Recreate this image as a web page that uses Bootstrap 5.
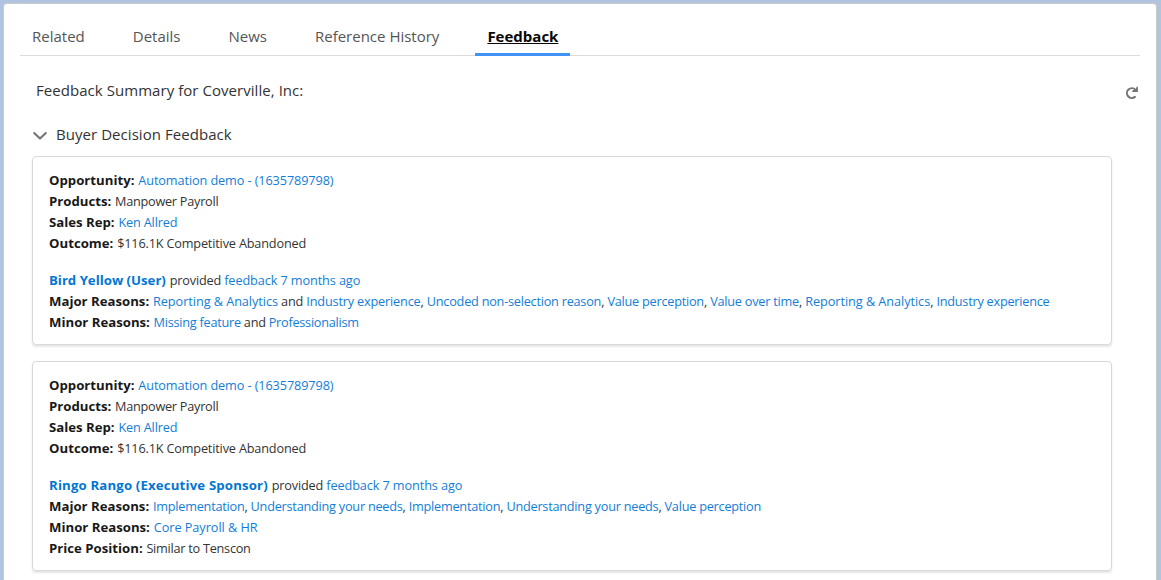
<!DOCTYPE html>
<html lang="en">
<head>
<meta charset="utf-8">
<title>Feedback</title>
<meta name="viewport" content="width=device-width, initial-scale=1">
<link rel="stylesheet" href="https://cdn.jsdelivr.net/npm/bootstrap@5.3.0/dist/css/bootstrap.min.css">
<style>
html,body{height:100%}
body{background:#b0c4df;font-family:"Open Sans","Noto Sans",sans-serif;font-size:12.7px;line-height:21px;color:#333;letter-spacing:-.17px}
.fb a{color:#127dd7;text-decoration:none}
.fb b,.fb a.fw-bold{font-size:13.2px;letter-spacing:0;color:#181818;margin-right:.7px}
.fb a.fw-bold{color:#0176d3}
.panel{margin:3px 4px 0 3px;height:577px;border:1px solid #c9c9c9;border-bottom:0;border-radius:4px 4px 0 0;padding:16px 16px 0}
.tabs{height:36px;border-bottom:1px solid #dddbda;gap:24px;letter-spacing:0}
.tabs .nav-link{padding:0 12px;height:36px;line-height:32px;font-size:15px;color:#555;white-space:nowrap}
.tabs .nav-link.active{color:#080707;font-weight:700;letter-spacing:0;text-decoration:underline;border-bottom:3px solid #3f93f5}
.heading{font-size:15px;line-height:24px;letter-spacing:.05px}
.summary{padding:22px 0 0 16px}
.section-head{margin:20px 0 10px 12px;gap:8px}
.reload{margin:8px 1px 0 0}
.fb{margin:0 28px 16px 12px;border:1px solid #d8d8d8;border-radius:4px;box-shadow:0 2px 2px rgba(0,0,0,.1);padding:13px 16px 11px;white-space:nowrap}
.gap-row{margin-top:16px}
.t1{letter-spacing:-.1px}
.t2{letter-spacing:-.25px}
.t3{letter-spacing:-.23px}
.t4{letter-spacing:-.05px}
.fb a.wide{letter-spacing:.17px}
</style>
<script src="https://cdn.jsdelivr.net/npm/bootstrap@5.3.0/dist/js/bootstrap.bundle.min.js"></script>
</head>
<body class="overflow-hidden">
<main class="panel bg-white">
  <nav class="nav tabs flex-nowrap">
    <a class="nav-link" href="#">Related</a>
    <a class="nav-link" href="#">Details</a>
    <a class="nav-link" href="#">News</a>
    <a class="nav-link" href="#">Reference History</a>
    <a class="nav-link active" href="#">Feedback</a>
  </nav>
  <div class="summary d-flex justify-content-between align-items-start">
    <div class="heading">Feedback Summary for Coverville, Inc:</div>
    <svg class="reload" width="14" height="14" viewBox="0 0 14 14" fill="none"><path d="M9.9 10.9A4.9 4.9 0 1 1 10.3 3.6" stroke="#747474" stroke-width="2" stroke-linecap="round"/><path d="M12.9.7V6H7.3V4.6L10.6 3.6 11.6.7Z" fill="#747474"/></svg>
  </div>
  <div class="section-head d-flex align-items-center">
    <svg class="mt-1" width="16" height="10" viewBox="0 0 16 10" fill="none"><path d="M2.2 2 8 7.6 13.8 2" stroke="#747474" stroke-width="2.1" stroke-linecap="round" stroke-linejoin="round"/></svg>
    <span class="heading">Buyer Decision Feedback</span>
  </div>

  <section class="fb">
    <div class="t1"><b>Opportunity:</b> <a href="#">Automation demo - (1635789798)</a></div>
    <div class="t2"><b>Products:</b> Manpower Payroll</div>
    <div><b>Sales Rep:</b> <a href="#">Ken Allred</a></div>
    <div><b>Outcome:</b> $116.1K Competitive Abandoned</div>
    <div class="gap-row"><a class="fw-bold" href="#">Bird Yellow (User)</a> provided <a class="t1" href="#">feedback 7 months ago</a></div>
    <div><b>Major Reasons:</b> <a class="t4" href="#">Reporting &amp; Analytics</a> and <a href="#">Industry experience</a>, <a class="t3" href="#">Uncoded non-selection reason</a>, <a class="t3" href="#">Value perception</a>, <a class="t3" href="#">Value over time</a>, <a class="t4" href="#">Reporting &amp; Analytics</a>, <a class="t3" href="#">Industry experience</a></div>
    <div class="t2"><b>Minor Reasons:</b> <a href="#">Missing feature</a> and <a href="#">Professionalism</a></div>
  </section>

  <section class="fb">
    <div class="t1"><b>Opportunity:</b> <a href="#">Automation demo - (1635789798)</a></div>
    <div class="t2"><b>Products:</b> Manpower Payroll</div>
    <div><b>Sales Rep:</b> <a href="#">Ken Allred</a></div>
    <div><b>Outcome:</b> $116.1K Competitive Abandoned</div>
    <div class="gap-row"><a class="fw-bold wide" href="#">Ringo Rango (Executive Sponsor)</a> provided <a class="t1" href="#">feedback 7 months ago</a></div>
    <div class="t3"><b>Major Reasons:</b> <a href="#">Implementation</a>, <a href="#">Understanding your needs</a>, <a href="#">Implementation</a>, <a href="#">Understanding your needs</a>, <a href="#">Value perception</a></div>
    <div class="t4"><b>Minor Reasons:</b> <a href="#">Core Payroll &amp; HR</a></div>
    <div class="t2"><b>Price Position:</b> Similar to Tenscon</div>
  </section>
</main>
</body>
</html>
